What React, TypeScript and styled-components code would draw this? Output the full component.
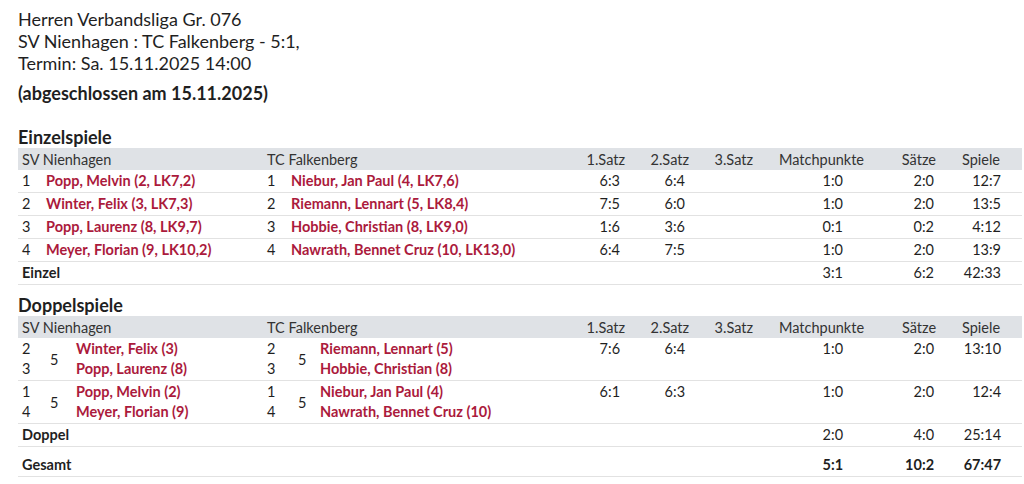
import * as React from 'react';
import styled, { createGlobalStyle } from 'styled-components';

const GlobalStyle = createGlobalStyle`
  body {
    margin: 0;
    padding: 8px 2px 0 18px;
    background: #fff;
    color: #1f1f1f;
    font-family: Lato, 'Open Sans', sans-serif;
  }
`;

const Title = styled.div`
  font-size: 18px;
  line-height: 22px;
`;

const Status = styled.div`
  margin-top: 8px;
  font-size: 18px;
  line-height: 22px;
  font-weight: 700;
`;

const Section = styled.div<{ gap: number }>`
  margin-top: ${(p) => p.gap}px;
  font-size: 18px;
  line-height: 22px;
  font-weight: 700;
`;

const Table = styled.table`
  width: 1004px;
  border-collapse: collapse;
  table-layout: fixed;
  font-size: 14.5px;
`;

const HeadRow = styled.tr`
  background: #dfe2e6;
  color: #333;
`;

const Th = styled.th<{ pad?: number }>`
  height: 22px;
  padding: 0 ${(p) => p.pad ?? 0}px 0 4px;
  font-weight: 400;
  text-align: ${(p) => (p.pad !== undefined ? 'right' : 'left')};
  white-space: nowrap;
`;

const Row = styled.tr`
  border-bottom: 1px solid #e2e2e2;
`;

const Td = styled.td<{ pad?: number; bold?: boolean; lines?: boolean }>`
  height: ${(p) => (p.lines ? 40 : 22)}px;
  padding: ${(p) => (p.lines ? '1px' : '0')} ${(p) => p.pad ?? 0}px
    ${(p) => (p.lines ? '1px' : '0')} 4px;
  line-height: ${(p) => (p.lines ? '20px' : '22px')};
  text-align: ${(p) => (p.pad !== undefined ? 'right' : 'left')};
  vertical-align: ${(p) => (p.lines ? 'top' : 'middle')};
  font-weight: ${(p) => (p.bold ? 700 : 400)};
  white-space: nowrap;
`;

const Mid = styled.td`
  padding: 0 0 0 4px;
  vertical-align: middle;
`;

const Player = styled.span`
  display: block;
  color: #ab1a3c;
  font-weight: 700;
`;

const Label = styled.td<{ spacer?: boolean }>`
  padding: ${(p) => (p.spacer ? '7px' : '0')} 0 0 4px;
  height: 22px;
  line-height: 22px;
  font-weight: 700;
`;

const Stat = styled(Td)<{ spacer?: boolean }>`
  padding-top: ${(p) => (p.spacer ? 7 : 0)}px;
`;

type Col = { label: string; width: number; head: number; val: number };

const cols: Col[] = [
  { label: '1.Satz', width: 62, head: 5, val: 10 },
  { label: '2.Satz', width: 64, head: 5, val: 9 },
  { label: '3.Satz', width: 64, head: 5, val: 9 },
  { label: 'Matchpunkte', width: 111, head: 5, val: 26 },
  { label: 'Sätze', width: 72, head: 5, val: 7 },
  { label: 'Spiele', width: 81, head: 22, val: 21 },
];

const singles = [
  ['1', 'Popp, Melvin (2, LK7,2)', '1', 'Niebur, Jan Paul (4, LK7,6)', '6:3', '6:4', '', '1:0', '2:0', '12:7'],
  ['2', 'Winter, Felix (3, LK7,3)', '2', 'Riemann, Lennart (5, LK8,4)', '7:5', '6:0', '', '1:0', '2:0', '13:5'],
  ['3', 'Popp, Laurenz (8, LK9,7)', '3', 'Hobbie, Christian (8, LK9,0)', '1:6', '3:6', '', '0:1', '0:2', '4:12'],
  ['4', 'Meyer, Florian (9, LK10,2)', '4', 'Nawrath, Bennet Cruz (10, LK13,0)', '6:4', '7:5', '', '1:0', '2:0', '13:9'],
];

const doubles = [
  {
    home: [['2', 'Winter, Felix (3)'], ['3', 'Popp, Laurenz (8)']],
    away: [['2', 'Riemann, Lennart (5)'], ['3', 'Hobbie, Christian (8)']],
    score: ['7:6', '6:4', '', '1:0', '2:0', '13:10'],
  },
  {
    home: [['1', 'Popp, Melvin (2)'], ['4', 'Meyer, Florian (9)']],
    away: [['1', 'Niebur, Jan Paul (4)'], ['4', 'Nawrath, Bennet Cruz (10)']],
    score: ['6:1', '6:3', '', '1:0', '2:0', '12:4'],
  },
];

function StatCols() {
  return (
    <>
      {cols.map((c) => (
        <col key={c.label} style={{ width: c.width }} />
      ))}
    </>
  );
}

function HeadCells() {
  return (
    <>
      {cols.map((c) => (
        <Th key={c.label} pad={c.head}>
          {c.label}
        </Th>
      ))}
    </>
  );
}

function Totals(props: { label: string; values: string[]; bold?: boolean; spacer?: boolean; span: number }) {
  return (
    <Row>
      <Label colSpan={props.span} spacer={props.spacer}>
        {props.label}
      </Label>
      {props.values.map((v, i) => (
        <Stat key={i} pad={cols[i].val} bold={props.bold} spacer={props.spacer}>
          {v}
        </Stat>
      ))}
    </Row>
  );
}

export default function App() {
  return (
    <>
      <GlobalStyle />
      <Title>Herren Verbandsliga Gr. 076</Title>
      <Title>SV Nienhagen : TC Falkenberg - 5:1,</Title>
      <Title>Termin: Sa. 15.11.2025 14:00</Title>
      <Status>(abgeschlossen am 15.11.2025)</Status>

      <Section gap={22}>Einzelspiele</Section>
      <Table>
        <colgroup>
          <col style={{ width: 24 }} />
          <col style={{ width: 221 }} />
          <col style={{ width: 24 }} />
          <col style={{ width: 281 }} />
          <StatCols />
        </colgroup>
        <tbody>
          <HeadRow>
            <Th colSpan={2}>SV Nienhagen</Th>
            <Th colSpan={2}>TC Falkenberg</Th>
            <HeadCells />
          </HeadRow>
          {singles.map((r) => (
            <Row key={r[1]}>
              <Td>{r[0]}</Td>
              <Td>
                <Player>{r[1]}</Player>
              </Td>
              <Td>{r[2]}</Td>
              <Td>
                <Player>{r[3]}</Player>
              </Td>
              {r.slice(4).map((v, i) => (
                <Td key={i} pad={cols[i].val}>
                  {v}
                </Td>
              ))}
            </Row>
          ))}
          <Totals label="Einzel" span={4} values={['', '', '', '3:1', '6:2', '42:33']} />
        </tbody>
      </Table>

      <Section gap={9}>Doppelspiele</Section>
      <Table>
        <colgroup>
          <col style={{ width: 28 }} />
          <col style={{ width: 26 }} />
          <col style={{ width: 191 }} />
          <col style={{ width: 31 }} />
          <col style={{ width: 22 }} />
          <col style={{ width: 252 }} />
          <StatCols />
        </colgroup>
        <tbody>
          <HeadRow>
            <Th colSpan={3}>SV Nienhagen</Th>
            <Th colSpan={3}>TC Falkenberg</Th>
            <HeadCells />
          </HeadRow>
          {doubles.map((d) => (
            <Row key={d.home[0][1]}>
              <Td lines>
                {d.home[0][0]}
                <br />
                {d.home[1][0]}
              </Td>
              <Mid>5</Mid>
              <Td lines>
                <Player>{d.home[0][1]}</Player>
                <Player>{d.home[1][1]}</Player>
              </Td>
              <Td lines>
                {d.away[0][0]}
                <br />
                {d.away[1][0]}
              </Td>
              <Mid>5</Mid>
              <Td lines>
                <Player>{d.away[0][1]}</Player>
                <Player>{d.away[1][1]}</Player>
              </Td>
              {d.score.map((v, i) => (
                <Td key={i} lines pad={cols[i].val}>
                  {v}
                </Td>
              ))}
            </Row>
          ))}
          <Totals label="Doppel" span={6} values={['', '', '', '2:0', '4:0', '25:14']} />
          <Totals label="Gesamt" span={6} bold spacer values={['', '', '', '5:1', '10:2', '67:47']} />
        </tbody>
      </Table>
    </>
  );
}
